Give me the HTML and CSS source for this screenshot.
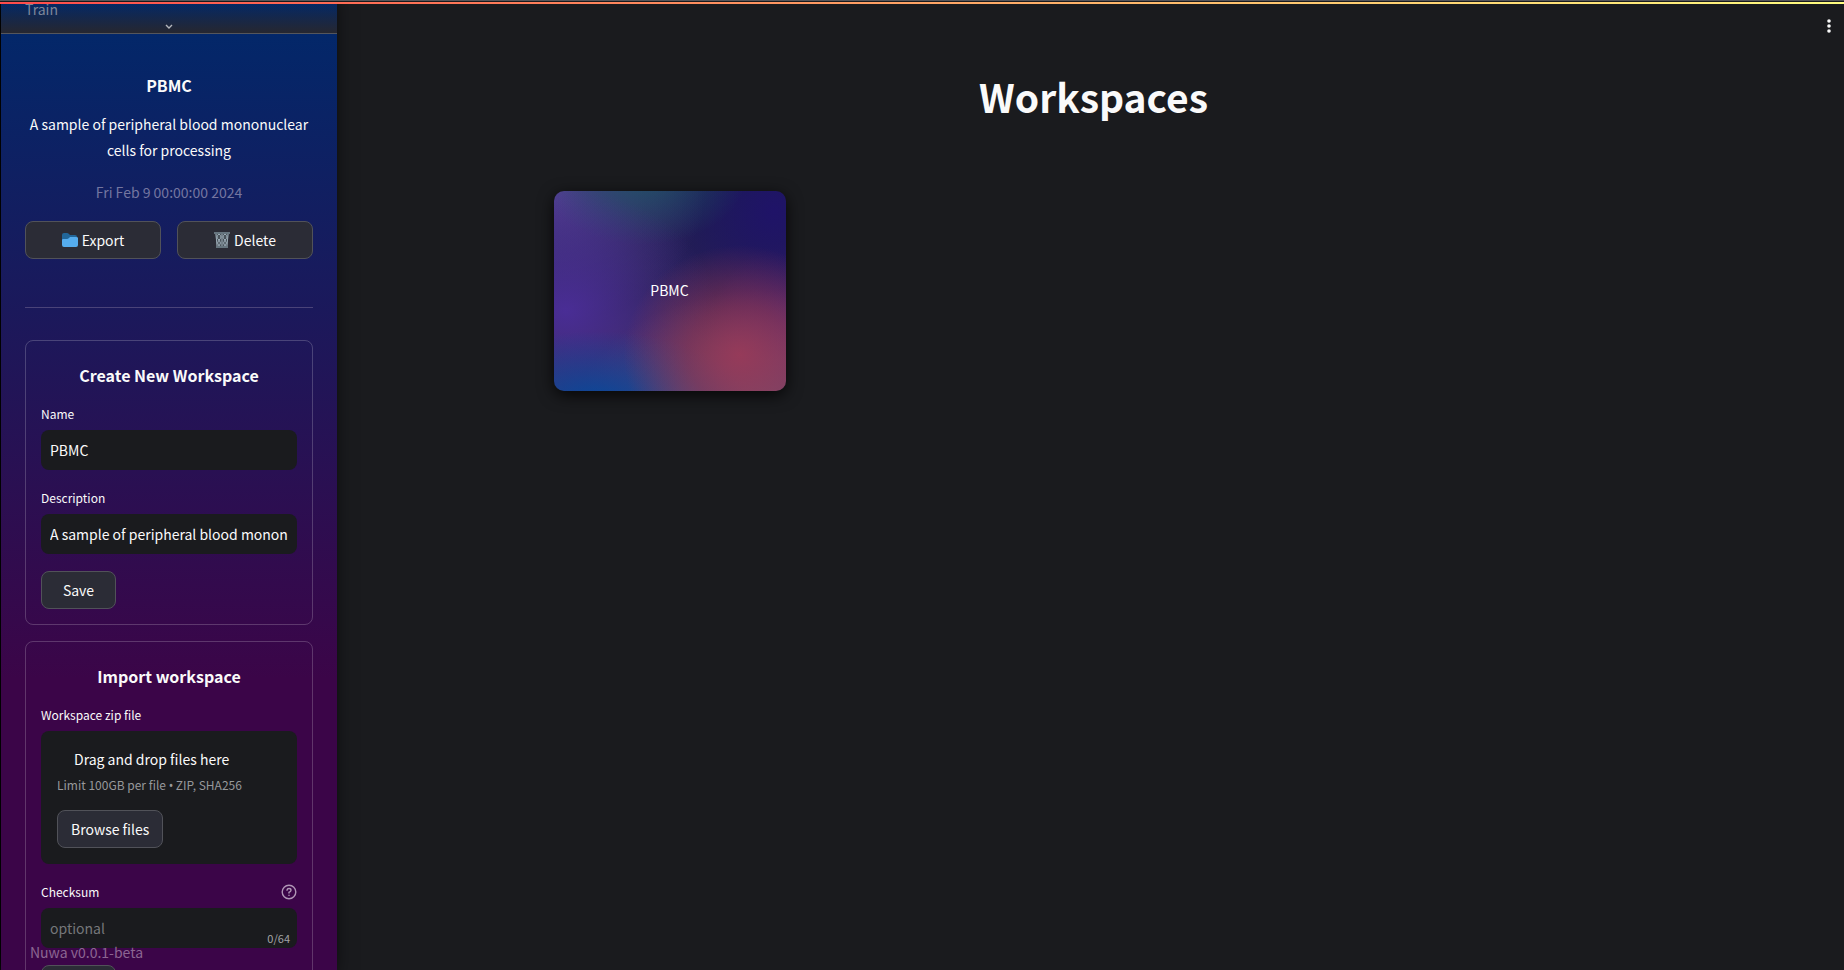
FILE: index.html
```html
<!DOCTYPE html>
<html lang="en">
<head>
<meta charset="utf-8">
<title>Nuwa</title>
<link rel="stylesheet" href="styles.css">
</head>
<body>
<div class="decoration"></div>
<div class="app">
  <aside class="sidebar">
    <nav class="nav">
      <a class="nav-link" href="#">Train</a>
      <button class="nav-more" aria-label="Show more pages">
        <svg width="8" height="6" viewBox="0 0 8 6"><path d="M1 1l3 3 3-3" fill="none" stroke="currentColor" stroke-width="1.4"/></svg>
      </button>
    </nav>
    <div class="side-body">
      <section class="current">
        <h3 class="heading">PBMC</h3>
        <p class="desc">A sample of peripheral blood mononuclear cells for processing</p>
        <p class="date">Fri Feb 9 00:00:00 2024</p>
        <div class="actions">
          <button class="btn">
            <svg width="16" height="14" viewBox="0 0 16 14"><path d="M0 2Q0 0 2 0H5Q6 0 7 1L8 2H13Q15 2 15 4V12H0Z" fill="#226699"/><path d="M0 7Q0 6 1 6H5Q6 6 7 5L8 4H14Q16 4 16 5V12Q16 14 14 14H2Q0 14 0 12Z" fill="#55acee"/></svg>
            Export
          </button>
          <button class="btn">
            <svg width="16" height="16" viewBox="0 0 16 16"><path d="M1 1L3 15H13L15 1Z" fill="#4a545c"/><path d="M2 2L3 14M14 2L13 14M5 2Q1 5 5 8Q8 11 5 14M5 2Q9 5 5 8Q2 11 5 14M11 2Q7 5 11 8Q14 11 11 14M11 2Q15 5 11 8Q8 11 11 14M8 2V14" fill="none" stroke="#9aaab5"/><path d="M0 0H16V2H0ZM2 14H14V16H2Z" fill="#66757f"/></svg>
            Delete
          </button>
        </div>
      </section>
      <hr class="divider">
      <form class="card">
        <h3 class="heading">Create New Workspace</h3>
        <label class="label" for="name">Name</label>
        <input class="input" id="name" type="text" value="PBMC">
        <label class="label label-next" for="description">Description</label>
        <input class="input" id="description" type="text" value="A sample of peripheral blood mononuclear cells for processing">
        <button class="btn btn-form" type="button">Save</button>
      </form>
      <form class="card">
        <h3 class="heading">Import workspace</h3>
        <span class="label">Workspace zip file</span>
        <div class="dropzone">
          <span class="drop-title">Drag and drop files here</span>
          <span class="drop-limit">Limit 100GB per file <span class="bullet">•</span> ZIP, SHA256</span>
          <button class="btn btn-browse" type="button">Browse files</button>
        </div>
        <div class="label-row">
          <label class="label" for="checksum">Checksum</label>
          <svg class="help" width="16" height="16" viewBox="0 0 16 16" fill="none" stroke="currentColor" stroke-width="1.4" stroke-linecap="round"><circle cx="8" cy="8" r="6.8"/><path d="M6 6.2Q6.2 4.5 8 4.5Q10 4.5 10 6.2Q10 7.3 8 8.3V9M8 11.3V11.4"/></svg>
        </div>
        <div class="field">
          <input class="input" id="checksum" type="text" placeholder="optional">
          <span class="count">0/64</span>
        </div>
        <button class="btn btn-form" type="button" aria-label="Import"></button>
      </form>
    </div>
    <div class="version">Nuwa v0.0.1-beta</div>
  </aside>
  <main class="main">
    <button class="menu" aria-label="Menu">
      <svg width="4" height="14" viewBox="0 0 4 14" fill="currentColor"><circle cx="2" cy="2" r="1.8"/><circle cx="2" cy="7" r="1.8"/><circle cx="2" cy="12" r="1.8"/></svg>
    </button>
    <div class="content">
      <h1 class="title">Workspaces</h1>
      <div class="grid">
        <button class="tile">PBMC</button>
      </div>
    </div>
  </main>
</div>
</body>
</html>
```
FILE: styles.css
```css
* { box-sizing: border-box; }
html, body { height: 100%; }
body {
  margin: 0;
  background: #1a1b1e;
  color: #fafafa;
  font: 14px/26px "Noto Sans CJK SC", "Noto Sans", sans-serif;
  overflow: hidden;
}
h1, h3, p { margin: 0; }
button, input { font: inherit; color: inherit; }
.decoration {
  position: absolute;
  inset: 0 0 auto 0;
  z-index: 5;
  height: 4px;
  border-top: 1px solid #55565a;
  background: linear-gradient(#1a1b1e 1px, transparent 1px), linear-gradient(90deg, #ff4b4b, #fffd80);
}
.app { display: flex; height: 100%; border-left: 1px solid #111214; }
.sidebar {
  position: relative;
  z-index: 1;
  flex: 0 0 336px;
  overflow: hidden;
  background: linear-gradient(#00296b 0, #3b0548 70%, #3b0548);
  box-shadow: -10px 0 20px 4px #000;
}
.nav {
  display: flex;
  flex-direction: column;
  height: 34px;
  padding: 0 24px;
  border-bottom: 1px solid #55565c;
  background: linear-gradient(transparent, #262730);
}
.nav-link {
  height: 18px;
  line-height: 18px;
  color: #7e8699;
  text-decoration: none;
}
.nav-more {
  display: flex;
  justify-content: center;
  height: 15px;
  padding: 6px 0 3px;
  border: 0;
  background: none;
  color: #b5b7bd;
}
.side-body { padding: 35px 24px 0; }
.heading {
  font-size: 16px;
  line-height: 32px;
  font-weight: 600;
  text-align: center;
}
.desc { margin-top: 10px; text-align: center; }
.date { margin-top: 16px; color: #7476a0; text-align: center; }
.actions { display: grid; grid-template-columns: 1fr 1fr; gap: 16px; margin-top: 16px; }
.btn {
  display: inline-flex;
  align-items: center;
  justify-content: center;
  gap: 4px;
  height: 38px;
  padding: 0 12px;
  border: 1px solid #515259;
  border-radius: 8px;
  background: #2b2c36;
}
.divider { height: 1px; margin: 48px 0 32px; border: 0; background: #4a4379; }
.card {
  display: flex;
  flex-direction: column;
  padding: 15px;
  border: 1px solid rgba(250, 250, 250, 0.2);
  border-radius: 8px;
}
.card + .card { margin-top: 16px; }
.card .heading { margin: 3px 0 13px; }
.label { display: block; height: 26px; font-size: 12px; line-height: 20px; }
.label-next { margin-top: 18px; }
.input {
  width: 100%;
  height: 40px;
  padding: 0 9px;
  border: 0;
  border-radius: 8px;
  background: #1a1b1e;
}
.input::placeholder { color: #76777a; opacity: 1; }
.btn-form { align-self: flex-start; width: 75px; margin-top: 17px; }
.dropzone {
  display: flex;
  flex-direction: column;
  align-items: flex-start;
  padding: 15px 16px 16px;
  border-radius: 8px;
  background: #1a1b1e;
}
.drop-title { padding-left: 17px; }
.drop-limit { font-size: 12px; color: #97989b; }
.bullet { font-family: "Noto Sans", sans-serif; line-height: 20px; }
.btn-browse { margin-top: 12px; padding: 0 13px; }
.label-row { display: flex; justify-content: space-between; margin-top: 18px; }
.help { color: #b096b6; margin-top: 2px; }
.field { position: relative; }
.count { position: absolute; right: 7px; bottom: 0; font-size: 11px; line-height: 20px; color: #a3a4a6; }
.version { position: absolute; left: 29px; bottom: 5px; color: #8c6592; }
.main { position: relative; flex: 1; display: flex; justify-content: center; padding-left: 6px; }
.menu {
  position: absolute;
  top: 16px;
  right: 9px;
  display: flex;
  padding: 3px 4px;
  border: 0;
  background: none;
}
.content { width: 100%; max-width: 1080px; padding: 69px 0; }
.title { font-size: 39px; line-height: 54px; font-weight: 700; text-align: center; }
.grid { display: grid; grid-template-columns: repeat(auto-fill, 232px); margin-top: 68px; }
.tile {
  height: 200px;
  padding: 0 0 2px;
  border: 0;
  border-radius: 10px;
  color: #fff;
  background:
    radial-gradient(ellipse 50% 55% at 80% 82%, rgba(152, 58, 88, 0.95), rgba(140, 52, 82, 0.65) 45%, rgba(120, 45, 80, 0)),
    radial-gradient(ellipse 65% 35% at 18% 105%, #08489a, rgba(8, 72, 154, 0)),
    radial-gradient(ellipse 65% 60% at 5% 60%, rgba(76, 46, 156, 0.9), rgba(76, 46, 156, 0)),
    radial-gradient(ellipse 45% 35% at 38% -8%, rgba(31, 90, 104, 0.8), rgba(31, 90, 104, 0)),
    radial-gradient(ellipse 65% 65% at 0% 0%, #543d94, rgba(84, 61, 148, 0)),
    radial-gradient(ellipse 60% 75% at 95% 10%, #1f1368, rgba(31, 19, 104, 0)),
    radial-gradient(ellipse 80% 60% at 90% 110%, #7d6080, rgba(125, 96, 128, 0)),
    radial-gradient(ellipse 40% 50% at 105% 75%, #6c2c80, rgba(108, 44, 128, 0)),
    linear-gradient(#1a2048, #2b2250 50%, #473060);
  box-shadow: 0 4px 16px rgba(0, 0, 0, 0.8);
}
```
